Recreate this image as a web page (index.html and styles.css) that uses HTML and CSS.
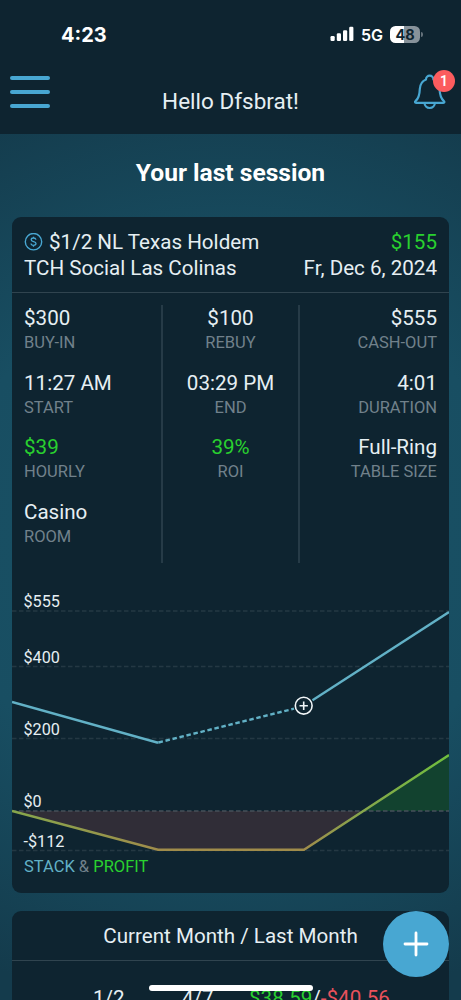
FILE: index.html
```html
<!DOCTYPE html>
<html lang="en">
<head>
    <meta charset="utf-8">
    <title>Poker Sessions</title>
    <link rel="stylesheet" href="styles.css">
</head>
<body>
    <header class="header">
        <div class="status-bar">
            <span class="time">4:23</span>
            <div class="status-right">
                <svg class="signal" width="24" height="16" viewBox="0 0 24 16" fill="#fff">
                    <rect x="0.5" y="10" width="4.2" height="5" rx="1.2"/>
                    <rect x="6.8" y="7.3" width="4.2" height="7.7" rx="1.2"/>
                    <rect x="13" y="4.2" width="4.2" height="10.8" rx="1.2"/>
                    <rect x="19.2" y="0.8" width="4.2" height="14.2" rx="1.2"/>
                </svg>
                <span class="network">5G</span>
                <span class="battery">48</span>
                <span class="battery-tip"></span>
            </div>
        </div>
        <div class="nav-bar">
            <div class="menu-btn">
                <span></span>
                <span></span>
                <span></span>
            </div>
            <div class="greeting">Hello Dfsbrat!</div>
            <div class="bell">
                <svg width="34" height="36" viewBox="0 0 34 36" fill="none" stroke="#48a7d2" stroke-width="2.2" stroke-linejoin="round">
                    <path d="M13 5.4a3.7 3.7 0 0 1 7.4 0c4.3 1.7 6 5 6.2 9.7c.2 5.800 1 9.100 4.100 11.700c1.200 1 .8 2-.4 2H3.100c-1.200 0-1.600-1-.4-2c3.100-2.600 3.900-5.900 4.100-11.700c.2-4.700 1.900-8 6.200-9.700z"/>
                    <path d="M11.500 28.800a5.200 5.200 0 0 0 10.400 0"/>
                </svg>
                <span class="badge">1</span>
            </div>
        </div>
    </header>

    <main class="content">
        <h1>Your last session</h1>

        <!-- last session -->
        <section class="card session">
            <div class="card-head">
                <div class="line">
                    <span class="game">
                        <svg width="19" height="19" viewBox="0 0 19 19" fill="none" stroke="#48a7d2">
                            <circle cx="9.5" cy="8.7" r="8.2" stroke-width="1.4"/>
                            <path d="M12 6.7C11.7 5.500 10.800 5 9.500 5C8.100 5 7.200 5.700 7.200 6.800C7.200 9.300 12 8 12 10.600C12 11.700 11 12.400 9.500 12.400C8.100 12.400 7.100 11.700 7 10.500M9.500 3.700V5M9.500 12.400v1.300" stroke-width="1.3"/>
                        </svg>
                        $1/2 NL Texas Holdem
                    </span>
                    <span class="green">$155</span>
                </div>
                <div class="line">
                    <span>TCH Social Las Colinas</span>
                    <span>Fr, Dec 6, 2024</span>
                </div>
            </div>

            <div class="stats">
                <div class="col">
                    <div class="stat"><b>$300</b><small>BUY-IN</small></div>
                    <div class="stat"><b>11:27 AM</b><small>START</small></div>
                    <div class="stat"><b class="green">$39</b><small>HOURLY</small></div>
                    <div class="stat"><b>Casino</b><small>ROOM</small></div>
                </div>
                <div class="col center">
                    <div class="stat"><b>$100</b><small>REBUY</small></div>
                    <div class="stat"><b>03:29 PM</b><small>END</small></div>
                    <div class="stat"><b class="green">39%</b><small>ROI</small></div>
                </div>
                <div class="col right">
                    <div class="stat"><b>$555</b><small>CASH-OUT</small></div>
                    <div class="stat"><b>4:01</b><small>DURATION</small></div>
                    <div class="stat"><b>Full-Ring</b><small>TABLE SIZE</small></div>
                </div>
            </div>

            <svg class="chart" width="437" height="292" viewBox="0 0 437 292">
                <!-- profit areas -->
                <path class="area-loss" d="M0 248L146 287H292L351.5 248z"/>
                <path class="area-win" d="M351.5 248L437 192V248z"/>
                <!-- grid -->
                <g class="grid">
                    <path d="M0 48H437"/>
                    <path d="M0 103.5H437"/>
                    <path d="M0 175.5H437"/>
                    <path class="zero" d="M0 248H437"/>
                    <path d="M0 287.5H437"/>
                </g>
                <defs>
                    <linearGradient id="profit" gradientUnits="userSpaceOnUse" x1="0" y1="192" x2="0" y2="287">
                        <stop offset="0" stop-color="#6fbe3d"/>
                        <stop offset="0.6" stop-color="#86a64c"/>
                        <stop offset="1" stop-color="#a08c4b"/>
                    </linearGradient>
                </defs>
                <path class="profit-line" d="M0 248L146 286.7H292L437 192"/>
                <!-- stack -->
                <path class="stack-line" d="M0 139L145 179.5H146.5"/>
                <path class="stack-line dashed" d="M146.5 179.5L282 145.7"/>
                <path class="stack-line" d="M300.5 137.3L437 49"/>
                <g class="rebuy">
                    <circle cx="291.7" cy="142.7" r="8.4"/>
                    <path d="M287.5 142.7h8.4M291.7 138.5v8.4"/>
                </g>
                <g class="axis">
                    <text x="11.5" y="44">$555</text>
                    <text x="11.5" y="100">$400</text>
                    <text x="11.5" y="172">$200</text>
                    <text x="11.5" y="244">$0</text>
                    <text x="11.5" y="284">-$112</text>
                </g>
            </svg>
            <div class="legend">
                <span class="stack">STACK</span> &amp; <span class="green">PROFIT</span>
            </div>
        </section>

        <!-- month comparison -->
        <section class="card months">
            <div class="months-title">Current Month / Last Month</div>
            <div class="months-row">
                <span>1/2</span>
                <span>4/7</span>
                <span><span class="green">$38.59</span>/<span class="red">-$40.56</span></span>
            </div>
        </section>
    </main>

    <div class="add-btn">
        <svg width="26" height="26" viewBox="0 0 26 26" stroke="#fff" stroke-width="2.8" stroke-linecap="round">
            <path d="M2 13h22M13 2v22"/>
        </svg>
    </div>
    <div class="home-indicator"></div>
</body>
</html>
```

FILE: styles.css
```css
* {
    box-sizing: border-box;
}
body {
    margin: 0;
    height: 1000px;
    overflow: hidden;
    position: relative;
    font-family: Roboto, "Liberation Sans", sans-serif;
    font-size: 20.6px;
    color: #e6eff3;
    background: radial-gradient(ellipse 520px 480px at 50% 54%, #185266 0%, #184e62 55%, #143b4c 100%);
}
.green {
    color: #29d12f;
}
.red {
    color: #e8525c;
}

/* header */
.header {
    height: 134px;
    background: #0e2430;
}
.status-bar {
    display: flex;
    justify-content: space-between;
    align-items: center;
    height: 68px;
    padding: 0 38px 0 61px;
    color: #fff;
    font-family: Inter, sans-serif;
    font-weight: 700;
}
.time {
    padding-top: 1px;
    font-size: 20px;
}
.status-right {
    display: flex;
    align-items: center;
}
.network {
    margin: 0 7px;
    padding-top: 1px;
    font-size: 16px;
    font-weight: 600;
}
.battery {
    width: 30px;
    height: 17px;
    border-radius: 5.5px;
    background: linear-gradient(to right, #fff 48%, #87929a 48%);
    color: #0e2430;
    font-size: 14.5px;
    line-height: 17px;
    text-align: center;
}
.battery-tip {
    width: 2px;
    height: 5px;
    margin-left: 1px;
    border-radius: 0 2px 2px 0;
    background: #64727b;
}
.nav-bar {
    display: grid;
    grid-template-columns: 40px 1fr 40px;
    height: 66px;
    padding: 0 10px;
}
.menu-btn {
    display: flex;
    flex-direction: column;
    gap: 10px;
    padding-top: 8px;
}
.menu-btn span {
    height: 4px;
    border-radius: 2px;
    background: #48a7d2;
}
.greeting {
    padding-top: 20px;
    font-size: 22.5px;
    line-height: 26px;
    text-align: center;
}
.bell {
    position: relative;
    padding-top: 6px;
}
.bell svg {
    display: block;
    margin-left: 2px;
}
.badge {
    position: absolute;
    top: 2px;
    right: -4px;
    width: 22px;
    height: 22px;
    border-radius: 50%;
    background: #fc5c5e;
    color: #fff;
    font-size: 14px;
    font-weight: 600;
    line-height: 22px;
    text-align: center;
}

/* content */
.content {
    padding: 0 12px;
}
h1 {
    margin: 0;
    height: 83px;
    padding-top: 24px;
    color: #fff;
    font-size: 24.6px;
    font-weight: 700;
    line-height: 29px;
    text-align: center;
}
.card {
    border-radius: 9px;
    background: #0e2430;
    overflow: hidden;
}
.session {
    height: 676px;
    margin-bottom: 18px;
}
.card-head {
    height: 76px;
    padding: 12px 12px 10px;
    border-bottom: 1px solid #30444f;
    line-height: 26px;
}
.line {
    display: flex;
    justify-content: space-between;
}
.game {
    display: flex;
    align-items: center;
    gap: 6px;
}
.stats {
    display: grid;
    grid-template-columns: 151px 137px 149px;
    height: 258px;
    margin-top: 12px;
}
.col {
    padding: 0 12px;
    border-right: 2px solid #263b47;
}
.center {
    text-align: center;
}
.right {
    border-right: none;
    text-align: right;
}
.stat {
    height: 64.5px;
}
.stat b {
    display: block;
    font-weight: 400;
    line-height: 26px;
}
.stat small {
    display: block;
    color: #71818b;
    font-size: 16.5px;
    line-height: 23px;
}

/* chart */
.chart {
    display: block;
}
.area-loss {
    fill: #302d37;
}
.area-win {
    fill: #12422f;
}
.grid path {
    stroke: #243843;
    stroke-width: 1.4;
    stroke-dasharray: 4.5 2.5;
}
.grid .zero {
    stroke: #45505a;
}
.profit-line {
    fill: none;
    stroke: url(#profit);
    stroke-width: 2.4;
}
.stack-line {
    fill: none;
    stroke: #62b1c6;
    stroke-width: 2.4;
}
.dashed {
    stroke-dasharray: 4.5 2.7;
}
.rebuy {
    fill: none;
    stroke: #f0f5f7;
    stroke-width: 1.6;
}
.axis text {
    fill: #e6eff3;
    font-size: 16.2px;
}
.legend {
    padding-left: 12px;
    color: #71818b;
    font-size: 16.5px;
    line-height: 23px;
}
.stack {
    color: #62b1c6;
}

/* month comparison */
.months {
    height: 120px;
}
.months-title {
    height: 50px;
    border-bottom: 1px solid #30444f;
    line-height: 50px;
    text-align: center;
}
.months-row {
    display: grid;
    grid-template-columns: 89px 67px 1fr;
    padding: 24px 0 0 81px;
    line-height: 26px;
}

.add-btn {
    position: absolute;
    left: 383px;
    top: 911px;
    display: flex;
    align-items: center;
    justify-content: center;
    width: 66px;
    height: 66px;
    border-radius: 50%;
    background: #48a7d2;
}
.home-indicator {
    position: absolute;
    left: 149px;
    top: 985px;
    width: 164px;
    height: 6px;
    border-radius: 3px;
    background: #fff;
}
```
